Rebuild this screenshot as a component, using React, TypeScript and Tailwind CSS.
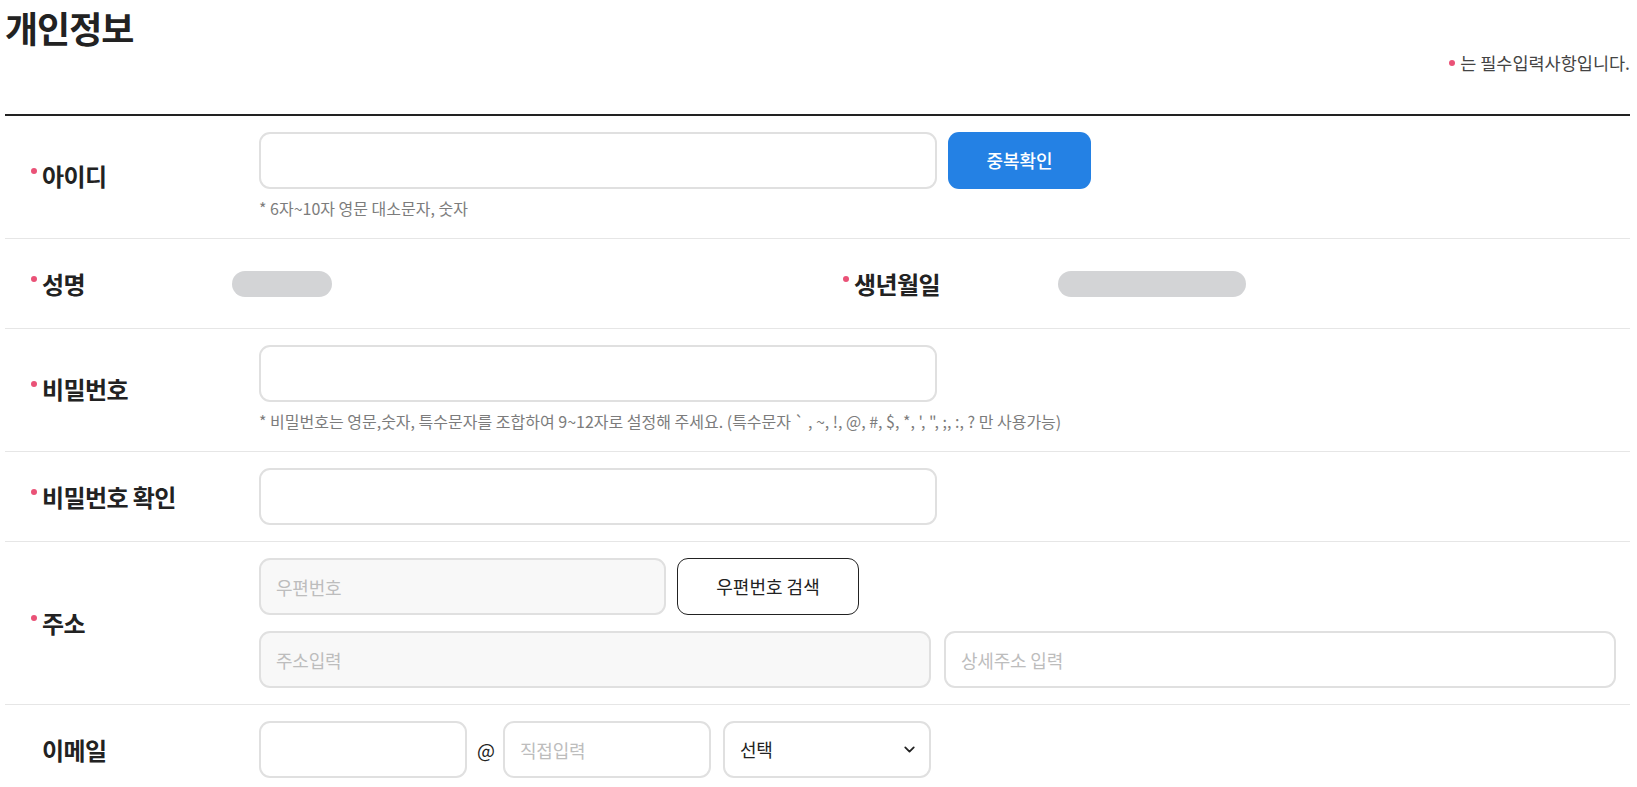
import type React from "react"
import { ChevronDown } from "lucide-react"

const FONT = "font-['Pretendard','Noto_Sans_CJK_KR','Noto_Sans',sans-serif]"

// Required mark
const Dot = () => <span className="mt-[7px] mr-[5px] inline-block h-[6px] w-[6px] shrink-0 rounded-full bg-[#ea5277]" />

const Label = ({ children, required = true, className = "" }: { children: React.ReactNode; required?: boolean; className?: string }) => {
  return (
    <div className={`flex shrink-0 items-start pl-[26px] ${className}`}>
      {required ? <Dot /> : <span className="mr-[11px] inline-block w-0" />}
      <span className="text-[24px] font-bold leading-[30px] tracking-[-0.6px] text-[#222]">{children}</span>
    </div>
  )
}

const Input = ({ placeholder = "", className = "", gray = false }: { placeholder?: string; className?: string; gray?: boolean }) => {
  return (
    <input
      placeholder={placeholder}
      className={`h-[57px] rounded-[11px] border-2 border-[#e0e0e0] px-[15px] text-[18px] tracking-[-0.2px] text-[#222] outline-none placeholder:text-[#bdbdbd] ${
        gray ? "bg-[#f8f8f8]" : "bg-white"
      } ${className}`}
    />
  )
}

const Help = ({ children }: { children: React.ReactNode }) => {
  return <p className="mt-[7px] text-[16px] leading-[24px] text-[#7c7c7c]">{children}</p>
}

const Row = ({ children, className = "" }: { children: React.ReactNode; className?: string }) => {
  return <div className={`flex items-center border-b border-[#e6e6e6] ${className}`}>{children}</div>
}

export default function App() {
  return (
    <div className={`min-h-screen bg-white ${FONT}`}>
      <div className="ml-[5px] w-[1625px]">
        {/* Header */}
        <h1 className="pt-[5px] text-[36px] font-bold leading-[44px] tracking-[-1px] text-[#222]">개인정보</h1>
        <div className="mt-[2px] flex items-start justify-end">
          <span className="mt-[9px] mr-[5px] inline-block h-[6px] w-[6px] rounded-full bg-[#ea5277]" />
          <span className="text-[17.5px] leading-[24px] text-[#444]">는 필수입력사항입니다.</span>
        </div>
        <div className="mt-[39px] h-[2px] bg-[#222]" />

        {/* 아이디 */}
        <Row className="pt-[16px] pb-[18px]">
          <Label className="w-[254px]">아이디</Label>
          <div>
            <div className="flex gap-[11px]">
              <Input className="w-[678px]" />
              <button className="h-[57px] w-[143px] rounded-[11px] bg-[#2481e4] text-[18px] font-medium text-white">
                중복확인
              </button>
            </div>
            <Help>* 6자~10자 영문 대소문자, 숫자</Help>
          </div>
        </Row>

        {/* 성명 / 생년월일 */}
        <Row className="h-[90px]">
          <Label className="w-[227px]">성명</Label>
          <div className="h-[26px] w-[100px] rounded-full bg-[#d3d4d6]" />
          <Label className="ml-[485px] w-[241px]">생년월일</Label>
          <div className="h-[26px] w-[188px] rounded-full bg-[#d3d4d6]" />
        </Row>

        {/* 비밀번호 */}
        <Row className="pt-[16px] pb-[18px]">
          <Label className="w-[254px]">비밀번호</Label>
          <div>
            <Input className="w-[678px]" />
            <Help>* 비밀번호는 영문,숫자, 특수문자를 조합하여 9~12자로 설정해 주세요. (특수문자 ` , ~, !, @, #, $, *, ', ", ;, :, ? 만 사용가능)</Help>
          </div>
        </Row>

        {/* 비밀번호 확인 */}
        <Row className="py-[16px]">
          <Label className="w-[254px]">비밀번호 확인</Label>
          <Input className="w-[678px]" />
        </Row>

        {/* 주소 */}
        <Row className="py-[16px]">
          <Label className="w-[254px]">주소</Label>
          <div className="flex flex-col gap-[16px]">
            <div className="flex gap-[11px]">
              <Input gray placeholder="우편번호" className="w-[407px]" />
              <button className="h-[57px] w-[182px] rounded-[11px] border border-[#222] bg-white text-[18px] text-[#222]">
                우편번호 검색
              </button>
            </div>
            <div className="flex gap-[13px]">
              <Input gray placeholder="주소입력" className="w-[672px]" />
              <Input placeholder="상세주소 입력" className="w-[672px]" />
            </div>
          </div>
        </Row>

        {/* 이메일 */}
        <div className="flex items-center py-[16px]">
          <Label required={false} className="w-[254px]">이메일</Label>
          <div className="flex items-center">
            <Input className="w-[208px]" />
            <span className="mr-[8px] ml-[10px] text-[19px] leading-none text-[#222]">@</span>
            <Input placeholder="직접입력" className="w-[208px]" />
            <div className="relative ml-[12px] flex h-[57px] w-[208px] items-center rounded-[11px] border-2 border-[#e0e0e0] px-[15px]">
              <span className="text-[18px] tracking-[-0.2px] text-[#222]">선택</span>
              <ChevronDown className="absolute right-[11px] h-[17px] w-[17px] text-[#222]" strokeWidth={2.5} />
            </div>
          </div>
        </div>
      </div>
    </div>
  )
}
